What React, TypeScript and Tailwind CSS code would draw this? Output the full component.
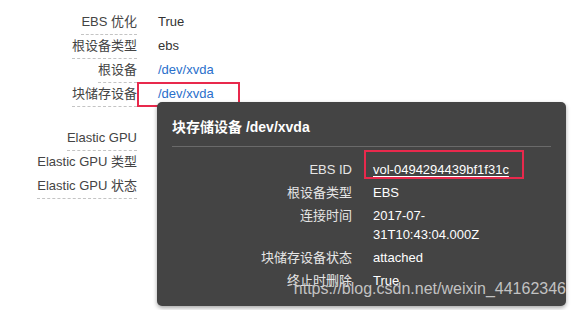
const font = "font-['Liberation_Sans','Noto_Sans_CJK_SC',sans-serif]"

interface Row {
  label: string
  value?: string
  link?: boolean
  underline?: boolean
}

const topRows: Row[] = [
  { label: 'EBS 优化', value: 'True', underline: true },
  { label: '根设备类型', value: 'ebs', underline: true },
  { label: '根设备', value: '/dev/xvda', link: true, underline: true },
  { label: '块储存设备', value: '/dev/xvda', link: true, underline: true },
]

const gpuRows: Row[] = [
  { label: 'Elastic GPU', underline: true },
  { label: 'Elastic GPU 类型' },
  { label: 'Elastic GPU 状态', underline: true },
]

const popupRows = [
  { label: 'EBS ID', value: 'vol-0494294439bf1f31c', link: true },
  { label: '根设备类型', value: 'EBS' },
  { label: '连接时间', value: '2017-07-31T10:43:04.000Z' },
  { label: '块储存设备状态', value: 'attached' },
  { label: '终止时删除', value: 'True' },
]

function ListRow({ row }: { row: Row }) {
  return (
    <div className="flex h-[24px] items-start">
      <div className="w-[137px] shrink-0 text-right">
        <span
          className={
            row.underline
              ? 'inline-block pb-[2px] leading-[20px] text-[#444] border-b border-dashed border-[#c4c4c4]'
              : 'inline-block pb-[2px] leading-[20px] text-[#444]'
          }
        >
          {row.label}
        </span>
      </div>
      <div
        className={
          row.link
            ? 'ml-[21px] leading-[20px] text-[#2a6fcb]'
            : 'ml-[21px] leading-[20px] text-[#333]'
        }
      >
        {row.value}
      </div>
    </div>
  )
}

export default function App() {
  return (
    <div className={`relative w-[576px] h-[310px] overflow-hidden bg-white text-[13px] ${font}`}>
      <div className="pt-[12px]">
        {topRows.map((r) => (
          <ListRow key={r.label} row={r} />
        ))}
        <div className="mt-[20px]">
          {gpuRows.map((r) => (
            <ListRow key={r.label} row={r} />
          ))}
        </div>
      </div>

      {/* annotation around the block device link */}
      <div className="absolute left-[137px] top-[82px] w-[103px] h-[25px] border-2 border-[#e8294c]" />

      {/* popover */}
      <div className="absolute left-[157px] top-[102px] w-[409px] h-[204px] rounded-[5px] bg-[#444444] shadow-[0_2px_4px_rgba(0,0,0,0.35)]">
        <div className="mx-[15px] pt-[15px] pb-[9px] border-b border-[#6a6a6a]">
          <div className="text-[14px] font-bold leading-[20px] text-white">块存储设备 /dev/xvda</div>
        </div>
        <div className="pt-[11px]">
          {popupRows.map((r) => (
            <div key={r.label} className="flex py-[2px] leading-[19px]">
              <div className="w-[195px] shrink-0 text-right text-[#e6e6e6]">{r.label}</div>
              <div
                className={
                  r.link
                    ? 'ml-[21px] w-[140px] text-white underline underline-offset-2'
                    : 'ml-[21px] w-[140px] text-white'
                }
              >
                {r.value}
              </div>
            </div>
          ))}
        </div>
      </div>

      {/* annotation around the EBS ID */}
      <div className="absolute left-[364px] top-[150px] w-[160px] h-[29px] border-2 border-[#e8294c]" />

      {/* watermark */}
      <div className="absolute right-[10px] top-[279px] text-[16px] leading-[20px] text-[#d0d0d0] opacity-90">
        https://blog.csdn.net/weixin_44162346
      </div>
    </div>
  )
}
